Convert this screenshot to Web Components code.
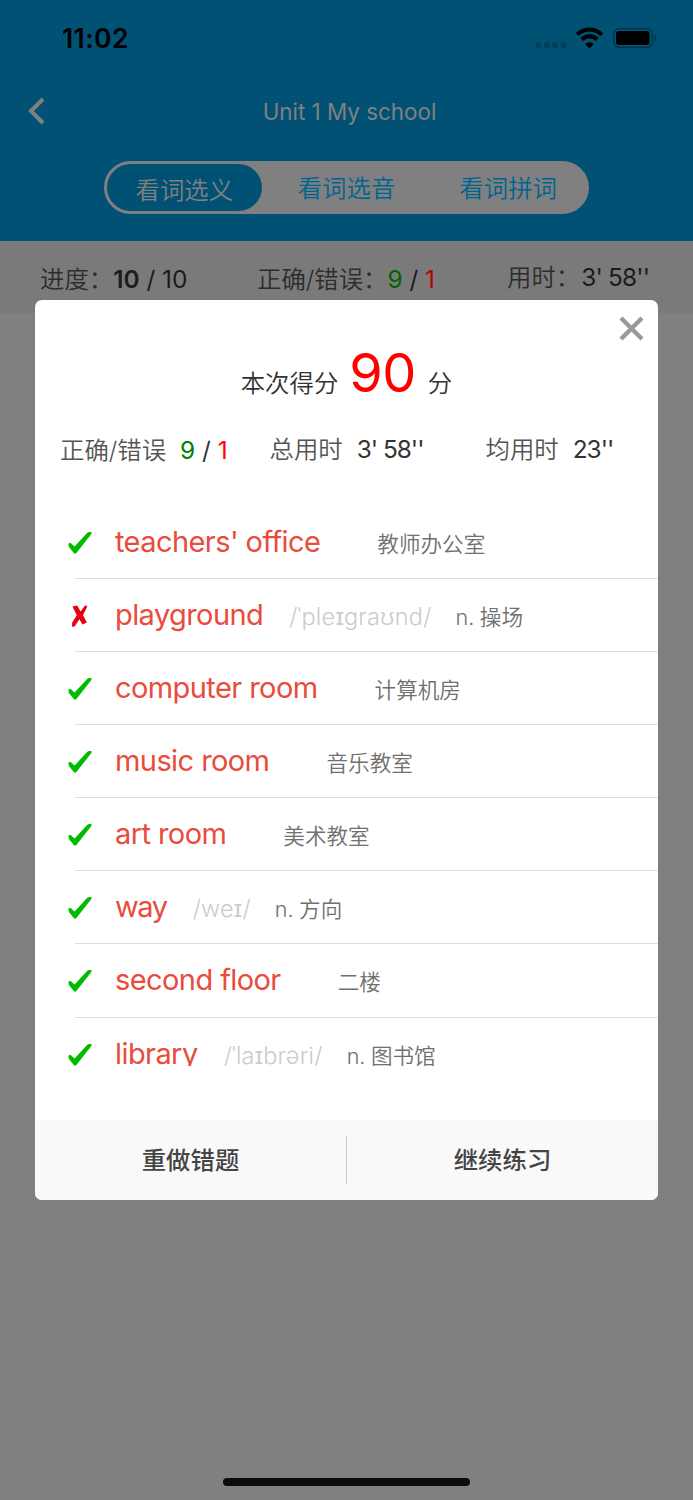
<!DOCTYPE html>
<html lang="zh-CN">
<head>
<meta charset="utf-8">
<title>Unit 1 My school</title>
<style>
  body {
    margin: 0;
    background: #808080;
    font-family: Inter, "Noto Sans CJK SC", sans-serif;
    font-size: 24.4px;
    color: #222;
  }
</style>
</head>
<body>
<practice-page></practice-page>

<script>
// Small helper: attach an open shadow root with the given markup
function shadow(el, html) {
  el.attachShadow({ mode: "open" }).innerHTML = html;
}

const ICONS = {
  right: `<svg width="24" height="24" viewBox="0 0 24 24"><path fill="#0b0" d="M.4 12.2C.8 10.6 3 10.6 4 12.2L6.6 14.6 18.6 1.5C20.3-.2 23.4-.4 23.8.9L22.6 3 9 20.3C8 22.1 6.8 22.2 5.6 20.7L.9 15.1Z"/></svg>`,
  wrong: `<svg width="24" height="24" viewBox="0 0 24 24"><path fill="#e60012" d="M4.4 1.6 9.2.4 12.6 6.6 17.2.2 19.4 1.4 15 10 18.8 17.6 14.4 19.6 11.4 14.2 6.6 21.6 4 21.8 4.2 17.6 8.8 10.2Z"/></svg>`
};

class StatusBar extends HTMLElement {
  connectedCallback() {
    shadow(this, `
      <style>
        :host {
          display: flex;
          align-items: center;
          height: 76px;
          padding: 0 36px 0 62px;
          color: #000;
        }
        time { flex: 1; font-size: 26.5px; font-weight: 600; letter-spacing: .4px; }
        svg { display: block; }
      </style>
      <time>11:02</time>
      <svg width="122" height="24" viewBox="0 0 122 24">
        <g fill="#00405c">
          <rect x=".7" y="16" width="5.6" height="6" rx="1.6"/>
          <rect x="9" y="16" width="5.6" height="6" rx="1.6"/>
          <rect x="17.3" y="16" width="5.6" height="6" rx="1.6"/>
          <rect x="25.6" y="16" width="5.6" height="6" rx="1.6"/>
        </g>
        <g fill="none" stroke="#000" stroke-width="4">
          <path d="M42.2 8.7a17.2 17.2 0 0 1 24.6 0"/>
          <path d="M46.8 13.5a10.8 10.8 0 0 1 15.4 0"/>
        </g>
        <path d="M54.5 22.5 50.2 18a6 6 0 0 1 8.600 0Z"/>
        <rect x="78.6" y="2.6" width="38.8" height="18.8" rx="5.5" fill="none" stroke="#003248" stroke-width="1.3"/>
        <rect x="81" y="5" width="33.5" height="14" rx="3"/>
        <path fill="#003248" d="M119.4 8.7c2.6.9 2.6 5.7 0 6.6Z"/>
      </svg>`);
  }
}

class NavBar extends HTMLElement {
  connectedCallback() {
    shadow(this, `
      <style>
        :host {
          display: grid;
          grid-template-columns: 60px 1fr 60px;
          align-items: center;
          height: 70px;
          color: #808080;
        }
        svg { margin-left: 28px; }
        h1 {
          margin: 0;
          padding-left: 6px;
          text-align: center;
          font-size: 22.4px;
          font-weight: 400;
        }
      </style>
      <svg width="18" height="28" viewBox="0 0 18 28"><path d="M15 2 3 14 15 26" fill="none" stroke="#808080" stroke-width="4"/></svg>
      <h1><slot></slot></h1>`);
  }
}

class ModeTabs extends HTMLElement {
  connectedCallback() {
    const tabs = this.getAttribute("tabs").split(",");
    shadow(this, `
      <style>
        :host {
          display: grid;
          grid-template-columns: repeat(3, 1fr);
          width: 485px;
          height: 53px;
          margin: 15px 0 0 104px;
          border-radius: 27px;
          background: #808080;
          color: #006491;
          font-weight: 350;
        }
        span { height: 53px; text-align: center; line-height: 54px; }
        .on {
          height: 47px;
          margin: 3px 4px 3px 3px;
          border-radius: 24px;
          background: #005174;
          color: #808080;
          line-height: 52px;
        }
      </style>
      ${tabs.map((t, i) => `<span class="${i ? "" : "on"}">${t}</span>`).join("")}`);
  }
}

// label + value pair, used both in the page bar and in the dialog
class StatItem extends HTMLElement {
  connectedCallback() {
    shadow(this, `
      <style>
        :host { display: flex; align-items: baseline; line-height: 36px; white-space: pre; }
        .label { color: var(--label, #555); margin-right: var(--label-gap, 14px); font-weight: 350; }
      </style>
      <span class="label">${this.getAttribute("label")}</span><span><slot></slot></span>`);
  }
}

class ProgressBar extends HTMLElement {
  connectedCallback() {
    shadow(this, `
      <style>
        :host {
          display: flex;
          height: 72px;
          background: #7a7a7a;
          color: #1c1c1c;
          --label: #2c2c2c;
          --label-gap: 0px;
        }
        stat-item { padding-top: 20px; }
        .total { width: 217px; padding-left: 40px; }
        .score { width: 250px; }
        .time { padding-top: 18px; }
        .time span { letter-spacing: -.8px; margin-left: 1px; }
        b { font-weight: 600; }
        .ok { color: #006400; }
        .bad { color: #b80000; }
      </style>
      <stat-item class="total" label="进度："><b>10</b> / 10</stat-item>
      <stat-item class="score" label="正确/错误："><span class="ok">9</span> / <span class="bad">1</span></stat-item>
      <stat-item class="time" label="用时："><span>3' 58''</span></stat-item>`);
  }
}

class WordRow extends HTMLElement {
  connectedCallback() {
    const wrong = this.hasAttribute("wrong");
    shadow(this, `
      <style>
        :host { display: flex; height: 73.15px; flex: none; padding-left: 33px; }
        .mark { width: 7px; padding-top: 26px; flex: none; }
        svg { display: block; overflow: visible; }
        .body {
          flex: 1;
          display: flex;
          align-items: baseline;
          box-sizing: border-box;
          padding-left: 40px;
          border-bottom: 1px solid #ddd;
          line-height: 72px;
          white-space: nowrap;
        }
        .word { color: #e94b3c; font-size: 29px; letter-spacing: var(--tracking, -.58px); }
        .phonetic { color: #ccc; font-size: 23.5px; font-weight: 300; letter-spacing: .2px; margin: 0 24px 0 26px; min-width: 7px; }
        .meaning { color: #707070; font-size: 21.6px; font-weight: 350; word-spacing: -.6px; }
      </style>
      <div class="mark">${wrong ? ICONS.wrong : ICONS.right}</div>
      <div class="body">
        <span class="word"><slot></slot></span>
        <span class="phonetic">${this.getAttribute("phonetic") || ""}</span>
        <span class="meaning">${this.getAttribute("meaning")}</span>
      </div>`);
  }
}

class ResultDialog extends HTMLElement {
  connectedCallback() {
    shadow(this, `
      <style>
        :host {
          position: absolute;
          left: 35px;
          top: 300px;
          width: 623px;
          height: 900px;
          display: flex;
          flex-direction: column;
          border-radius: 7px;
          overflow: hidden;
          background: #fff;
          color: #333;
        }
        .close { display: flex; justify-content: flex-end; padding: 15px 13px 0 0; height: 28px; }
        .score {
          display: flex;
          justify-content: center;
          align-items: baseline;
          height: 60px;
          line-height: 60px;
        }
        .score span { font-weight: 350; }
        .score b { margin: 0 12px 0 11px; color: #f00; font-size: 54px; font-weight: 400; letter-spacing: -.5px; }
        .stats { display: flex; height: 102.6px; padding: 28px 0 0 25px; box-sizing: border-box; }
        .stats .right { width: 209.5px; padding-top: 1px; }
        .stats .total { width: 216px; }
        .sec { letter-spacing: -1px; }
        .ok { color: #008000; }
        .bad { color: #f00; }
        .list { height: 560.4px; display: flex; flex-direction: column; overflow: hidden; }
        footer {
          display: flex;
          align-items: center;
          height: 80px;
          margin-top: auto;
          background: #f9f9f9;
        }
        button {
          flex: 1;
          height: 48px;
          padding: 0 0 4px;
          border: 0;
          background: none;
          font: inherit;
          font-weight: 500;
          color: #444;
        }
        button + button { border-left: 1px solid #ccc; }
      </style>
      <div class="close">
        <svg width="27" height="27" viewBox="0 0 27 27"><path d="M3 3 24 24M24 3 3 24" stroke="#999" stroke-width="4.4"/></svg>
      </div>
      <div class="score"><span>本次得分</span><b>90</b><span>分</span></div>
      <div class="stats">
        <stat-item class="right" label="正确/错误"><span class="ok">9</span> / <span class="bad">1</span></stat-item>
        <stat-item class="total" label="总用时"><span class="sec">3' 58''</span></stat-item>
        <stat-item label="均用时"><span class="sec">23''</span></stat-item>
      </div>
      <div class="list"><slot></slot></div>
      <footer><button>重做错题</button><button>继续练习</button></footer>`);
  }
}

class PracticePage extends HTMLElement {
  connectedCallback() {
    shadow(this, `
      <style>
        :host { display: flex; flex-direction: column; height: 1500px; position: relative; overflow: hidden; }
        header { height: 241px; background: #005174; }
        .home { width: 247px; height: 8px; border-radius: 4px; background: #0c0c0c; margin: auto auto 14px; }
        .tight { --tracking: -1.4px; }
      </style>
      <header>
        <status-bar></status-bar>
        <nav-bar>Unit 1 My school</nav-bar>
        <mode-tabs tabs="看词选义,看词选音,看词拼词"></mode-tabs>
      </header>
      <progress-bar></progress-bar>
      <div class="home"></div>
      <result-dialog>
        <word-row meaning="教师办公室">teachers' office</word-row>
        <word-row wrong phonetic="/ˈpleɪɡraʊnd/" meaning="n. 操场">playground</word-row>
        <word-row meaning="计算机房">computer room</word-row>
        <word-row meaning="音乐教室">music room</word-row>
        <word-row meaning="美术教室">art room</word-row>
        <word-row class="tight" phonetic="/weɪ/" meaning="n. 方向">way</word-row>
        <word-row meaning="二楼">second floor</word-row>
        <word-row phonetic="/ˈlaɪbrəri/" meaning="n. 图书馆">library</word-row>
      </result-dialog>`);
  }
}

customElements.define("status-bar", StatusBar);
customElements.define("nav-bar", NavBar);
customElements.define("mode-tabs", ModeTabs);
customElements.define("stat-item", StatItem);
customElements.define("progress-bar", ProgressBar);
customElements.define("word-row", WordRow);
customElements.define("result-dialog", ResultDialog);
customElements.define("practice-page", PracticePage);
</script>
</body>
</html>
